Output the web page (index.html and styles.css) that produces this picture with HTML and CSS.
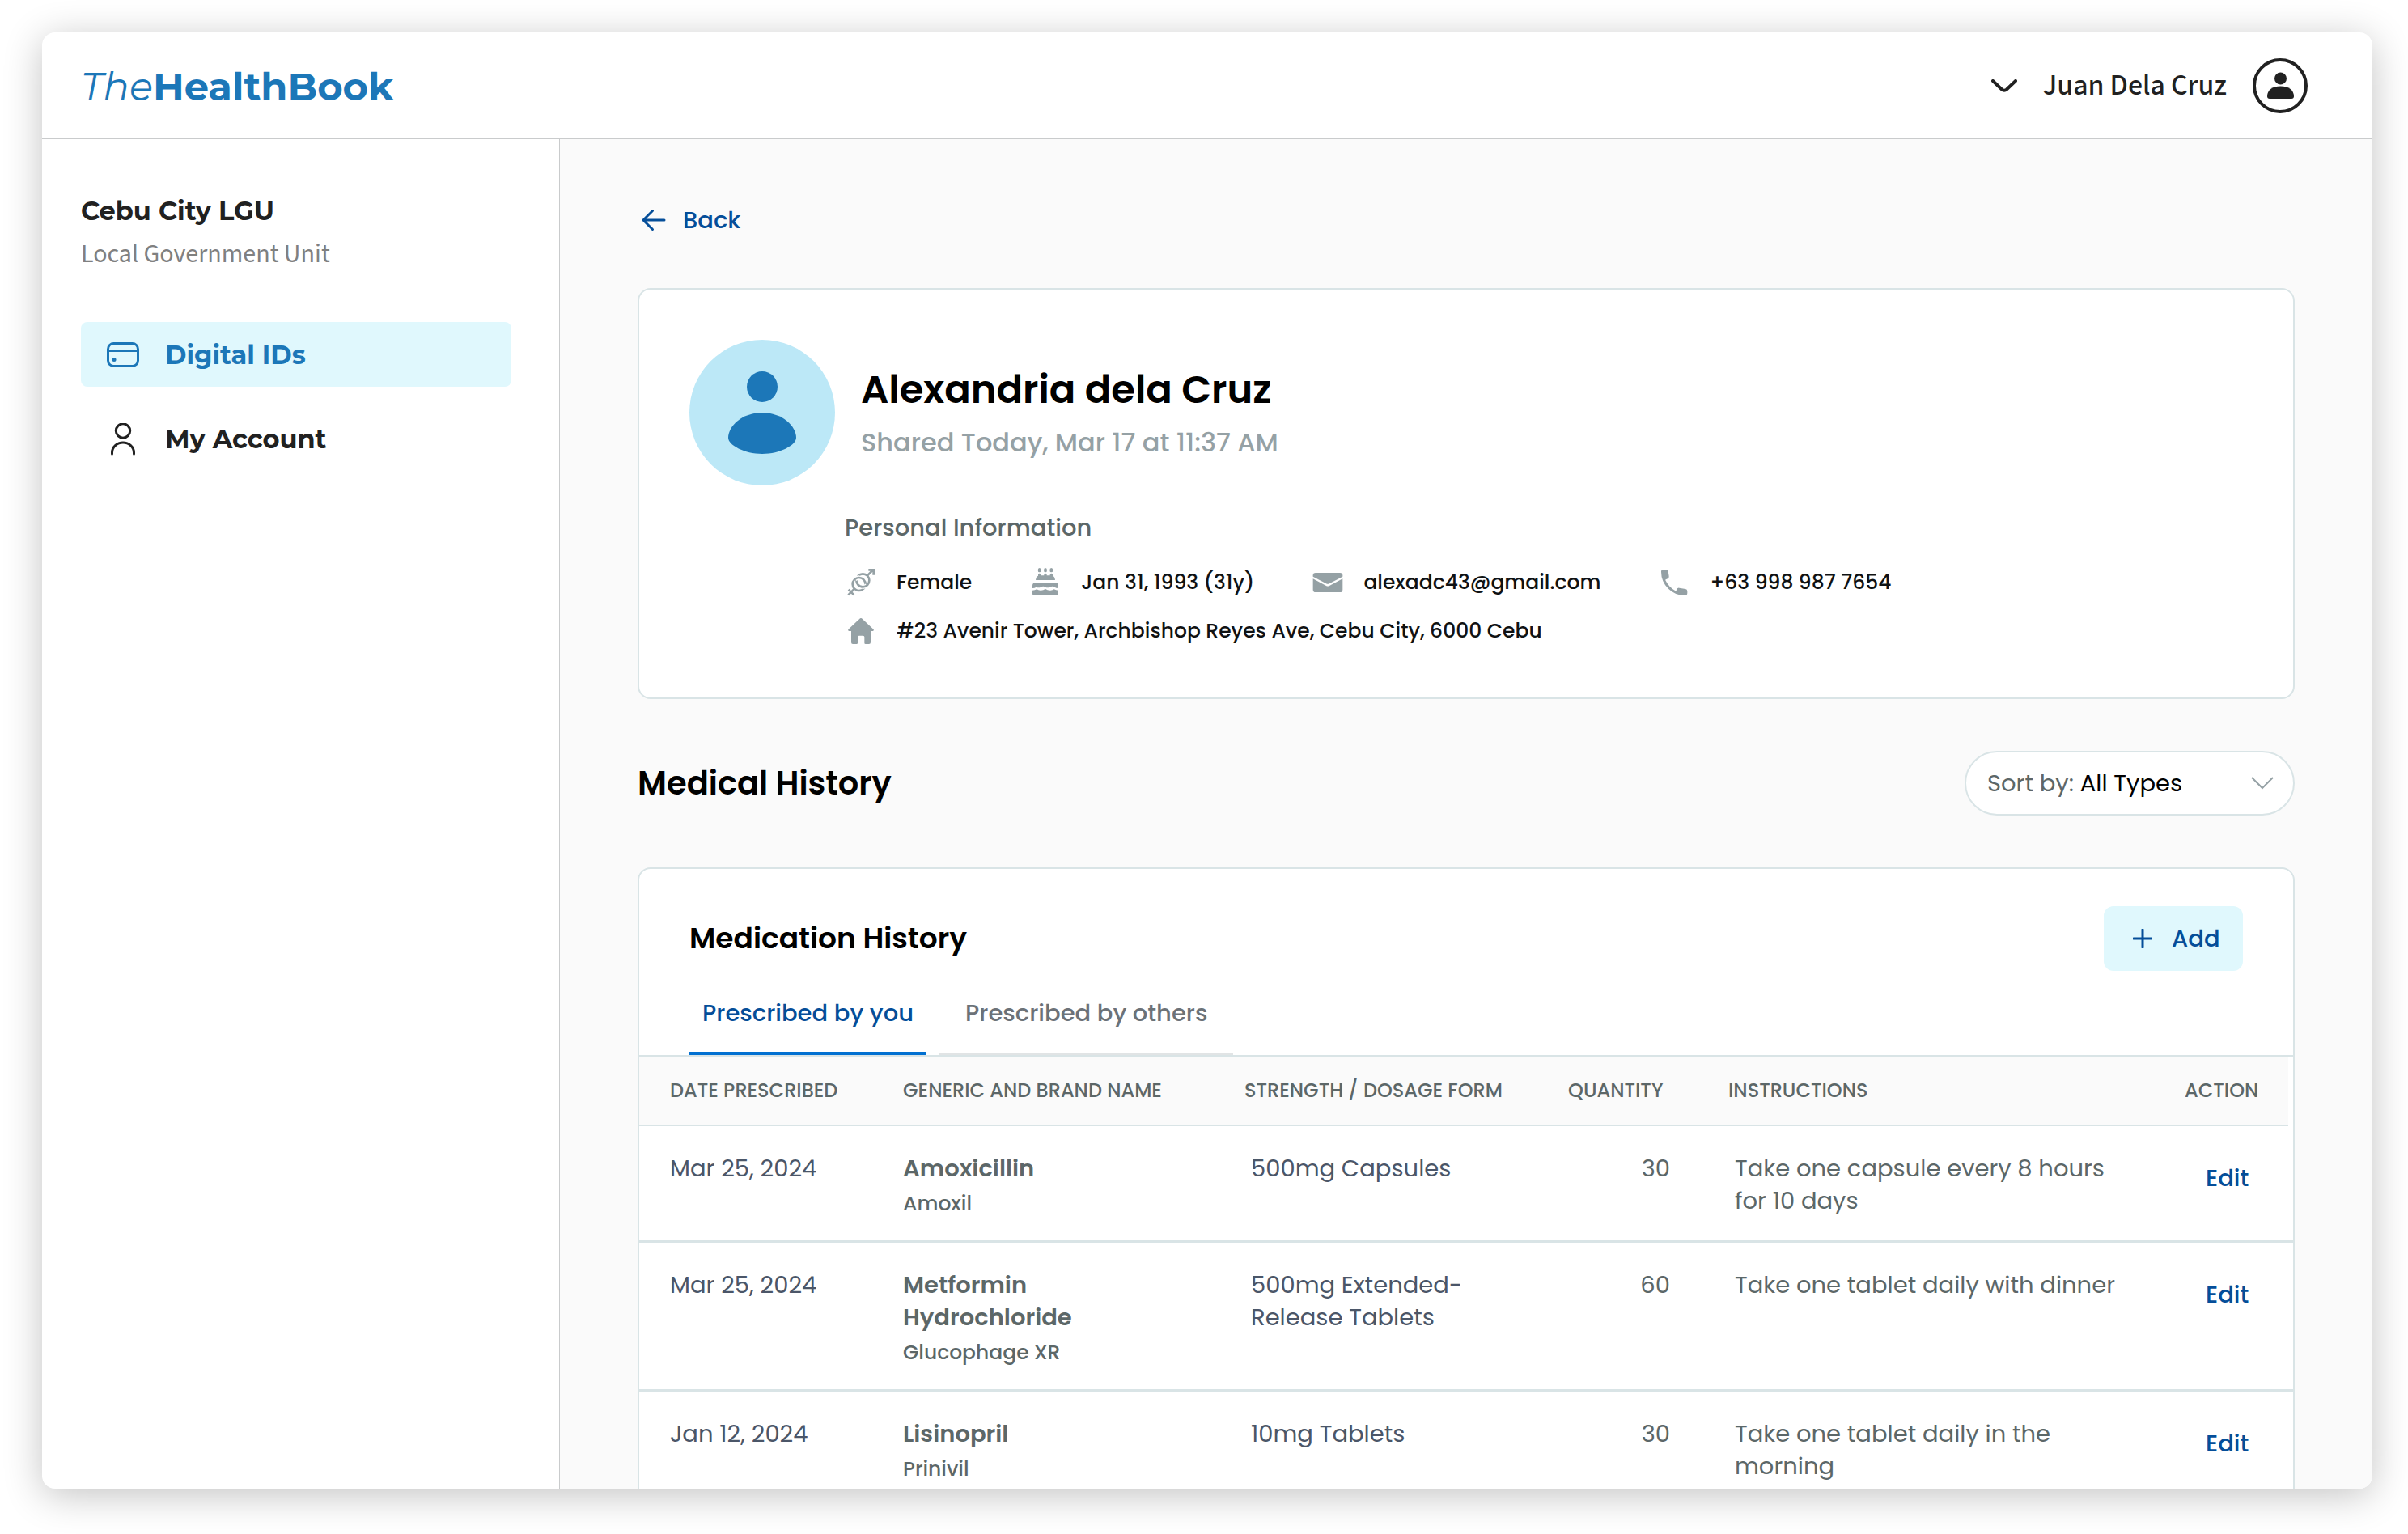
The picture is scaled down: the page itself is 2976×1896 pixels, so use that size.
FILE: index.html
```
<!DOCTYPE html>
<html lang="en">
<head>
<meta charset="utf-8">
<meta name="viewport" content="width=device-width, initial-scale=1">
<title>TheHealthBook – Alexandria dela Cruz</title>
<link rel="stylesheet" href="styles.css">
</head>
<body>
<div class="window">
  <header class="topbar">
    <a class="logo" href="#"><span class="logo-light">The</span>HealthBook</a>
    <button class="user" type="button">
      <svg class="user-chevron" viewBox="0 0 32 16" aria-hidden="true"><path d="M2 2 13 12.500Q16 15 19 12.500L30 2"/></svg>
      <span>Juan Dela Cruz</span>
      <svg class="user-avatar" viewBox="0 0 68 68" aria-hidden="true"><circle class="ring" cx="34" cy="34" r="32"/><circle cx="34.500" cy="25" r="7.500"/><path d="M18 47c0-8 7-12.500 16.500-12.500S51 39 51 47q0 3-3 3H21q-3 0-3-3z"/></svg>
    </button>
  </header>
  <div class="body">
    <aside class="sidebar">
      <h2 class="org">Cebu City LGU</h2>
      <p class="org-type">Local Government Unit</p>
      <nav class="nav">
        <a class="nav-item active" href="#">
          <svg viewBox="0 0 40 40" aria-hidden="true"><rect x="1.500" y="5.500" width="37" height="28" rx="7"/><path d="M2 14.500h36"/><circle class="dot" cx="9" cy="25.500" r="2.500"/></svg>
          <span>Digital IDs</span>
        </a>
        <a class="nav-item" href="#">
          <svg viewBox="0 0 40 40" aria-hidden="true"><circle cx="20" cy="9.500" r="8.700"/><path d="M6.500 38V36.500a13.500 12.500 0 0 1 27 0V38"/></svg>
          <span>My Account</span>
        </a>
      </nav>
    </aside>
    <main class="main">
      <a class="back" href="#">
        <svg viewBox="0 0 40 40" aria-hidden="true"><path d="M33 20H7M18.500 8.500 7 20l11.500 11.500"/></svg>
        <span>Back</span>
      </a>

      <section class="card profile">
        <div class="profile-head">
          <svg class="avatar" viewBox="0 0 180 180" aria-hidden="true"><circle class="avatar-bg" cx="90" cy="90" r="90"/><circle cx="90" cy="58" r="19"/><path d="M90 90c25 0 42 17 42 31 0 9-20 20-42 20s-42-11-42-20c0-14 17-31 42-31z"/></svg>
          <div class="profile-text">
            <h1 class="name">Alexandria dela Cruz</h1>
            <p class="shared">Shared Today, Mar 17 at 11:37 AM</p>
          </div>
        </div>
        <div class="info">
          <h2 class="info-title">Personal Information</h2>
          <ul class="info-list">
            <li>
              <svg viewBox="0 0 120 120" aria-hidden="true"><g class="line"><path d="M84 34 106 12M88 13h19v19M35 84 13 106M14 86l20 20"/><circle cx="67" cy="52" r="24"/><path class="gap" d="M37.600 47.600A24 24 0 0 1 55.100 42.100"/><circle cx="53" cy="66" r="24"/><path class="gap" d="M64.900 75.900A24 24 0 0 0 82.400 70.400"/><path d="M60 75A24 24 0 0 0 85 68"/></g></svg>
              <span>Female</span>
            </li>
            <li>
              <svg viewBox="0 3 120 120" aria-hidden="true"><ellipse cx="38" cy="17" rx="6" ry="8"/><ellipse cx="60" cy="17" rx="6" ry="8"/><ellipse cx="82" cy="17" rx="6" ry="8"/><path d="M24 54q1-13 9-16v-5q5-7 10 0v4h12v-4q5-7 10 0v4h12v-4q5-7 10 0v5q8 3 9 16z"/><path d="M12 84V74q0-11 13-11h70q13 0 13 11v10q-8 0-14-4-8-5-17 0-8 4-17 0-8-5-17 0-8 4-17 0-6 4-14 4z"/><path d="M12 92q9 0 16-4 7 5 16 4 8 0 16-5 8 5 16 5 9 1 16-4 7 4 16 4v12q0 7-8 7H20q-8 0-8-7z"/></svg>
              <span>Jan 31, 1993 (31y)</span>
            </li>
            <li>
              <svg viewBox="0 0 120 120" aria-hidden="true"><path d="M15 24h90q10 0 10 10v4L66 64q-6 3-12 0L5 38v-4q0-10 10-10z"/><path d="M5 46 54 72q6 3 12 0l49-26v40q0 10-10 10H15Q5 96 5 86z"/></svg>
              <span>alexadc43@gmail.com</span>
            </li>
            <li>
              <svg viewBox="0 0 120 120" aria-hidden="true"><path d="M19 12h12q6 0 7 6l3 19q1 7-5 9l-7 3q-2 1-1 3 13 27 39 40l3-7q3-6 9-5l23 4q7 1 7 8v7q0 9-9 9-36 0-61-25Q12 57 12 20q0-8 7-8z"/></svg>
              <span>+63 998 987 7654</span>
            </li>
          </ul>
          <ul class="info-list">
            <li>
              <svg viewBox="0 0 120 120" aria-hidden="true"><path d="M57 13q3-2 6 0l44 41q3 5-3 6h-8v42q0 6-6 6H77q-4 0-4-4V82q0-5-5-5H53q-5 0-5 5v22q0 4-4 4H30q-6 0-6-6V60h-8q-6-1-3-6z"/></svg>
              <span>#23 Avenir Tower, Archbishop Reyes Ave, Cebu City, 6000 Cebu</span>
            </li>
          </ul>
        </div>
      </section>

      <div class="section-head">
        <h2 class="section-title">Medical History</h2>
        <div class="sort">
          <label for="sort">Sort by:</label>
          <select id="sort"><option>All Types</option></select>
          <svg viewBox="0 0 28 16" aria-hidden="true"><path d="M1 1l13 13L27 1"/></svg>
        </div>
      </div>

      <section class="card medication">
        <div class="med-head">
          <h3 class="med-title">Medication History</h3>
          <button class="add" type="button">
            <svg viewBox="0 0 24 24" aria-hidden="true"><path d="M12 1v22M1 12h22"/></svg>
            <span>Add</span>
          </button>
        </div>
        <div class="tabs" role="tablist">
          <button class="tab selected" type="button" role="tab" aria-selected="true">Prescribed by you</button>
          <button class="tab" type="button" role="tab" aria-selected="false">Prescribed by others</button>
        </div>
        <table class="meds">
          <thead>
            <tr>
              <th class="col-date">Date prescribed</th>
              <th class="col-name">Generic and brand name</th>
              <th class="col-strength">Strength / Dosage form</th>
              <th class="col-qty">Quantity</th>
              <th>Instructions</th>
              <th class="col-action">Action</th>
            </tr>
          </thead>
          <tbody>
            <tr>
              <td class="date">Mar 25, 2024</td>
              <td class="drug"><strong>Amoxicillin</strong><small>Amoxil</small></td>
              <td class="strength">500mg Capsules</td>
              <td class="qty">30</td>
              <td class="instructions">Take one capsule every 8 hours for 10 days</td>
              <td class="action"><a href="#">Edit</a></td>
            </tr>
            <tr>
              <td class="date">Mar 25, 2024</td>
              <td class="drug"><strong>Metformin Hydrochloride</strong><small>Glucophage XR</small></td>
              <td class="strength">500mg Extended-Release Tablets</td>
              <td class="qty">60</td>
              <td class="instructions">Take one tablet daily with dinner</td>
              <td class="action"><a href="#">Edit</a></td>
            </tr>
            <tr>
              <td class="date">Jan 12, 2024</td>
              <td class="drug"><strong>Lisinopril</strong><small>Prinivil</small></td>
              <td class="strength">10mg Tablets</td>
              <td class="qty">30</td>
              <td class="instructions">Take one tablet daily in the morning</td>
              <td class="action"><a href="#">Edit</a></td>
            </tr>
          </tbody>
        </table>
      </section>
    </main>
  </div>
</div>
</body>
</html>
```
FILE: styles.css
```
:root {
  --blue: #1c77b8;
  --navy: #054e99;
  --ice: #e0f8fd;
  --line: #d9e4e6;
  --grey: #5c6768;
  --slate: #4b5668;
  --icon: #95a1a5;
  --ink: #212121;
  --sans: Poppins, Inter, sans-serif;
  --source: "Source Sans 3", "Noto Sans CJK JP", sans-serif;
}

* { box-sizing: border-box; }

body {
  margin: 0;
  height: 100vh;
  padding: 40px 44px 56px 52px;
  background: #fff;
  font-family: var(--sans);
  font-size: 29px;
  line-height: 40px;
  color: #000;
}

h1, h2, h3, p, ul { margin: 0; padding: 0; font-size: inherit; font-weight: inherit; }
a { color: inherit; text-decoration: none; }
button, select { font: inherit; color: inherit; border: 0; background: none; padding: 0; cursor: pointer; }
svg { flex: none; }

.window {
  display: flex;
  flex-direction: column;
  height: 100%;
  border-radius: 16px;
  overflow: hidden;
  background: #fff;
  box-shadow: 0 8px 48px rgba(0, 0, 0, 0.24);
}

/* Top bar */
.topbar {
  flex: none;
  display: flex;
  align-items: center;
  justify-content: space-between;
  height: 132px;
  padding: 0 80px 0 48px;
  border-bottom: 1px solid #c9cbcc;
}
.logo {
  padding-top: 2px;
  font-family: Montserrat, Inter, sans-serif;
  font-size: 48px;
  line-height: 64px;
  font-weight: 700;
  color: var(--blue);
}
.logo-light { font-weight: 400; font-style: italic; }
.user {
  display: flex;
  align-items: center;
  gap: 32px;
  font-family: var(--source);
  font-size: 36px;
  font-weight: 500;
  color: var(--ink);
}
.user-chevron { width: 32px; height: 16px; fill: none; stroke: var(--ink); stroke-width: 4; stroke-linecap: round; }
.user-avatar { width: 68px; height: 68px; fill: var(--ink); }
.ring { fill: none; stroke: var(--ink); stroke-width: 4; }

.body { flex: 1; display: flex; min-height: 0; }

/* Sidebar */
.sidebar {
  flex: none;
  width: 640px;
  padding: 69px 59px 0 48px;
  border-right: 1px solid #c9cbcc;
  font-family: Montserrat, Inter, sans-serif;
  color: var(--ink);
}
.org { font-size: 32px; font-weight: 700; }
.org-type { margin-top: 15px; font-family: var(--source); font-size: 32px; line-height: 36px; color: #808080; }
.nav { display: flex; flex-direction: column; gap: 24px; margin-top: 66px; }
.nav-item {
  display: flex;
  align-items: center;
  gap: 32px;
  height: 80px;
  padding: 2px 32px 0;
  border-radius: 8px;
  font-size: 32px;
  font-weight: 700;
}
.nav-item.active { background: var(--ice); color: var(--blue); }
.nav-item svg { width: 40px; height: 40px; fill: none; stroke: currentColor; stroke-width: 3; stroke-linecap: round; }
.nav-item .dot { fill: currentColor; stroke: none; }

/* Content */
.main { flex: 1; min-width: 0; overflow: hidden; padding: 80px 96px 0; background: #fafafa; }
.back { display: inline-flex; align-items: center; gap: 16px; vertical-align: top; font-weight: 500; color: var(--navy); }
.back svg { width: 40px; height: 40px; fill: none; stroke: currentColor; stroke-width: 3; stroke-linecap: round; stroke-linejoin: round; }

.card { border: 2px solid var(--line); border-radius: 16px; background: #fff; }

.profile { margin-top: 64px; padding: 62px; }
.profile-head { display: flex; gap: 32px; }
.avatar { width: 180px; height: 180px; fill: var(--blue); }
.avatar-bg { fill: #bce8f7; }
.profile-text { padding-top: 30px; }
.name { font-size: 48px; line-height: 64px; font-weight: 600; }
.shared { margin-top: 13px; font-size: 32px; font-weight: 500; color: var(--icon); }
.info { display: flex; flex-direction: column; gap: 20px; margin: 32px 0 0 192px; }
.info-title { margin-bottom: 8px; font-weight: 500; color: var(--grey); }
.info-list { display: flex; flex-wrap: wrap; gap: 20px 71px; list-style: none; font-size: 25px; font-weight: 500; color: #101213; }
.info-list li { display: flex; gap: 24px; }
.info-list svg { width: 40px; height: 40px; fill: var(--icon); }
.line { fill: none; stroke: var(--icon); stroke-width: 8; }
.gap { stroke: #fff; stroke-width: 16; }

.section-head { display: flex; align-items: center; justify-content: space-between; margin: 64px 0; }
.section-title { font-size: 40px; font-weight: 600; }
.sort {
  display: flex;
  align-items: center;
  width: 408px;
  height: 80px;
  padding: 0 24px 0 26px;
  border: 2px solid var(--line);
  border-radius: 40px;
  background: #fff;
}
.sort label { color: var(--grey); }
.sort select { flex: 1; appearance: none; margin-left: 8px; color: #000; }
.sort svg { width: 28px; height: 16px; fill: none; stroke: var(--icon); stroke-width: 2; }

/* Medication card */
.med-head { display: flex; align-items: center; justify-content: space-between; padding: 46px 62px 0; }
.med-title { font-size: 36px; font-weight: 600; }
.add {
  display: flex;
  align-items: center;
  gap: 24px;
  width: 172px;
  height: 80px;
  padding-left: 36px;
  border-radius: 12px;
  background: var(--ice);
  font-weight: 500;
  color: var(--navy);
}
.add svg { width: 24px; height: 24px; stroke: currentColor; stroke-width: 3; stroke-linecap: round; }
.tabs { display: flex; gap: 16px; padding: 16px 62px 0; }
.tab { padding: 16px 32px 30px; border-bottom: 2px solid #e1e4e5; line-height: 40px; font-weight: 500; color: #6c7278; }
.tab.selected { padding: 16px 16px 28px; border-bottom: 4px solid #0270d1; color: var(--navy); }

.meds { width: 100%; table-layout: fixed; border-collapse: separate; border-spacing: 0; border-top: 2px solid var(--line); }
.meds thead tr {
  background:
    linear-gradient(var(--line), var(--line)) left bottom / calc(100% - 6px) 2px no-repeat,
    linear-gradient(#fafafa, #fafafa) left top / calc(100% - 6px) 100% no-repeat;
}
.meds th {
  padding: 22px 0 24px 38px;
  font-size: 24px;
  font-weight: 500;
  text-align: left;
  text-transform: uppercase;
  white-space: nowrap;
  color: var(--grey);
}
.col-date { width: 288px; }
.col-name { width: 422px; }
.col-strength { width: 400px; }
.col-qty { width: 198px; }
.col-action { width: 172px; }
.meds td { padding: 32px 0 29px 38px; vertical-align: top; border-bottom: 3px solid var(--line); color: var(--grey); }
.meds .date { color: var(--slate); }
.meds .drug { padding-right: 72px; }
.drug strong { display: block; font-weight: 600; }
.drug small { display: block; margin-top: 8px; font-size: 25px; line-height: 32px; font-weight: 500; }
.meds .strength { padding: 32px 60px 29px 46px; color: var(--slate); }
.meds .qty { padding-right: 34px; text-align: right; }
.meds .instructions { padding: 32px 40px 29px 46px; }
.meds .action { padding: 44px 0 29px 64px; font-weight: 500; color: var(--navy); }
```
